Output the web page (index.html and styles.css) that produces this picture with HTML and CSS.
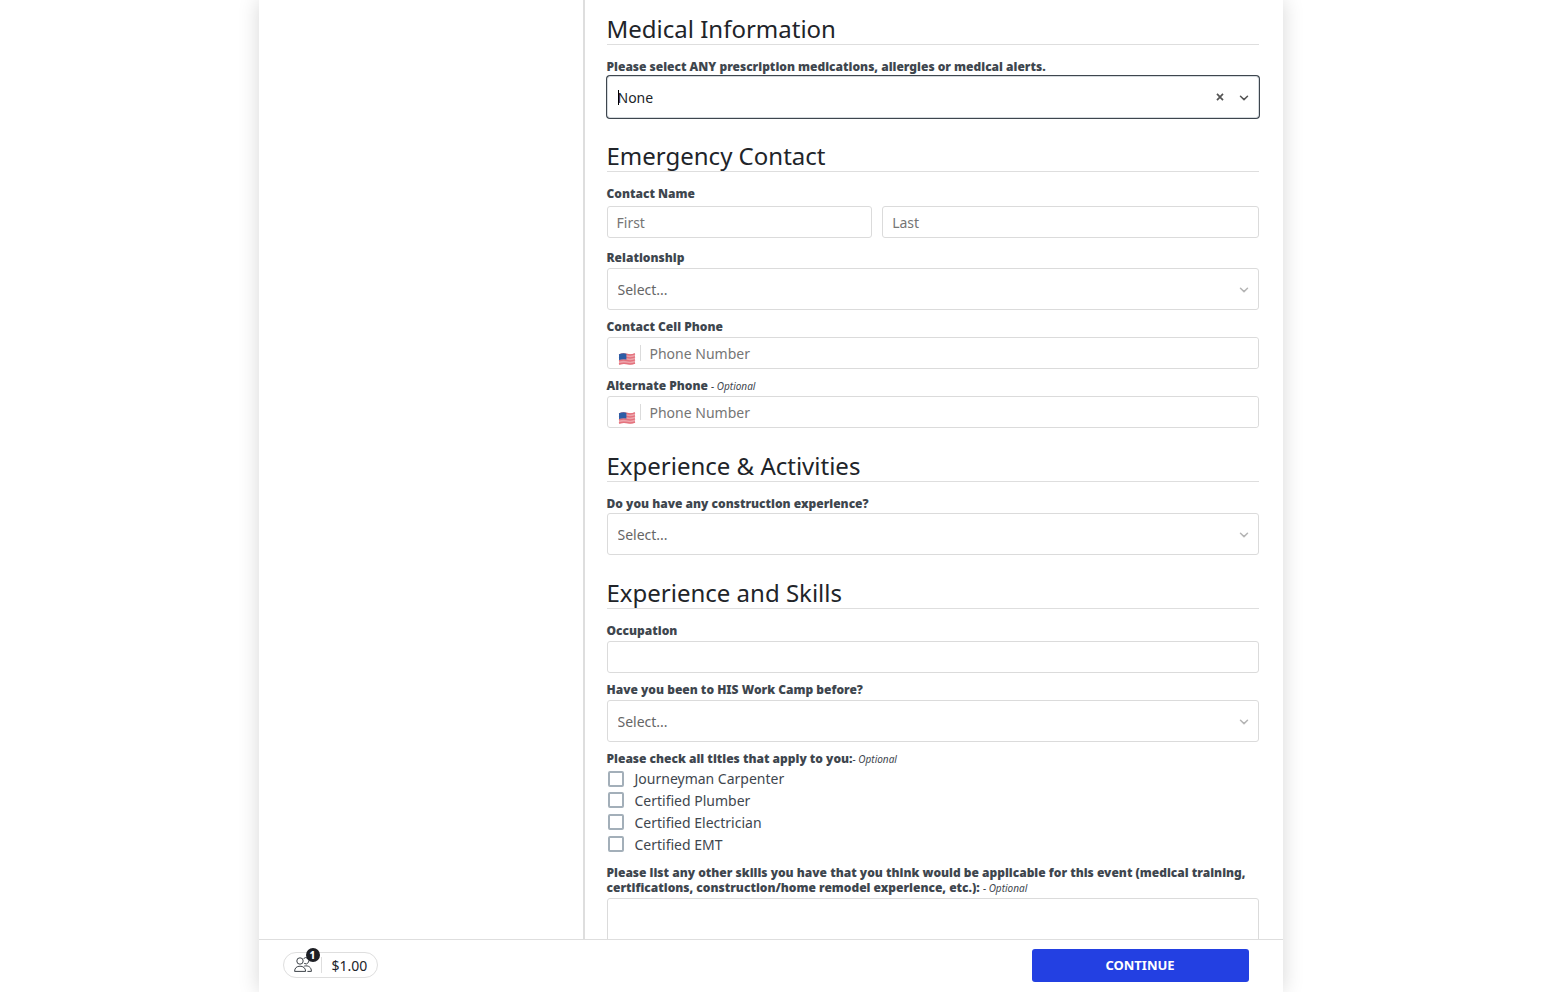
FILE: index.html
```
<!DOCTYPE html>
<html lang="en">
<head>
    <meta charset="UTF-8">
    <meta name="viewport" content="width=device-width, initial-scale=1.0">
    <title>Registration</title>
    <link rel="stylesheet" href="styles.css">
</head>
<body>

    <!-- Shared icons -->
    <svg class="icon-defs" width="0" height="0" aria-hidden="true">
        <symbol id="chevron" viewBox="0 0 10 10">
            <path d="M1.5 3.2 L5 6.6 L8.5 3.2" fill="none" stroke="currentColor" stroke-width="1.5" stroke-linecap="round" stroke-linejoin="round"/>
        </symbol>
        <symbol id="flag" viewBox="0 0 18 14">
            <path d="M1 2.2 Q5 0.8 9 1.8 T17 1.2 V11.8 Q13 13 9 12.2 T1 12.8 Z" fill="#eda4ab"/>
            <path d="M1 2.9 Q5 1.5 9 2.5 T17 1.9 M1 5.9 Q5 4.5 9 5.5 T17 4.9 M1 8.9 Q5 7.5 9 8.5 T17 7.9 M1 12 Q5 10.6 9 11.6 T17 11" fill="none" stroke="#e4727d" stroke-width="1.5"/>
            <path d="M1 2.2 Q5 0.8 8.4 1.7 V7.6 Q5 6.8 1 8 Z" fill="#2d5da6"/>
        </symbol>
    </svg>

    <div class="page">
        <main class="content">
            <aside class="sidebar"></aside>

            <form class="form" id="registration">
                <section>
                    <h2>Medical Information</h2>
                    <div class="field question">
                        <label for="medical">Please select ANY prescription medications, allergies or medical alerts.</label>
                        <div class="select-box active">
                            <select id="medical"><option>None</option></select>
                            <span class="text-cursor"></span>
                            <button class="clear" type="button" aria-label="Clear">
                                <svg width="8" height="8" viewBox="0 0 8 8"><path d="M1 0.8 L7 7.2 M7 0.8 L1 7.2" stroke="currentColor" stroke-width="1.7"/></svg>
                            </button>
                            <svg class="chevron"><use href="#chevron"/></svg>
                        </div>
                    </div>
                </section>

                <section>
                    <h2>Emergency Contact</h2>
                    <fieldset class="field name-field">
                        <legend>Contact Name</legend>
                        <div class="name-row">
                            <input type="text" placeholder="First" aria-label="First">
                            <input type="text" placeholder="Last" aria-label="Last">
                        </div>
                    </fieldset>
                    <div class="field">
                        <label for="relationship">Relationship</label>
                        <div class="select-box">
                            <select id="relationship"><option>Select...</option></select>
                            <svg class="chevron"><use href="#chevron"/></svg>
                        </div>
                    </div>
                    <div class="field">
                        <label for="cell">Contact Cell Phone</label>
                        <div class="phone">
                            <span class="country"><svg width="18" height="14"><use href="#flag"/></svg></span>
                            <input type="tel" id="cell" placeholder="Phone Number">
                        </div>
                    </div>
                    <div class="field">
                        <label for="alternate">Alternate Phone <em>- Optional</em></label>
                        <div class="phone">
                            <span class="country"><svg width="18" height="14"><use href="#flag"/></svg></span>
                            <input type="tel" id="alternate" placeholder="Phone Number">
                        </div>
                    </div>
                </section>

                <section>
                    <h2>Experience &amp; Activities</h2>
                    <div class="field question">
                        <label for="construction">Do you have any construction experience?</label>
                        <div class="select-box">
                            <select id="construction"><option>Select...</option></select>
                            <svg class="chevron"><use href="#chevron"/></svg>
                        </div>
                    </div>
                </section>

                <section>
                    <h2>Experience and Skills</h2>
                    <div class="field">
                        <label for="occupation">Occupation</label>
                        <input type="text" id="occupation">
                    </div>
                    <div class="field">
                        <label for="before">Have you been to HIS Work Camp before?</label>
                        <div class="select-box">
                            <select id="before"><option>Select...</option></select>
                            <svg class="chevron"><use href="#chevron"/></svg>
                        </div>
                    </div>
                    <fieldset class="field check-field">
                        <legend>Please check all titles that apply to you:<em>- Optional</em></legend>
                        <label class="check"><input type="checkbox"> Journeyman Carpenter</label>
                        <label class="check"><input type="checkbox"> Certified Plumber</label>
                        <label class="check"><input type="checkbox"> Certified Electrician</label>
                        <label class="check"><input type="checkbox"> Certified EMT</label>
                    </fieldset>
                    <div class="field">
                        <label for="skills">Please list any other skills you have that you think would be applicable for this event (medical training, certifications, construction/home remodel experience, etc.): <em>- Optional</em></label>
                        <textarea id="skills" rows="4"></textarea>
                    </div>
                </section>
            </form>
        </main>

        <footer class="footer">
            <button class="cart" type="button">
                <span class="people">
                    <svg width="18" height="16" viewBox="0 0 18 16" fill="none" stroke="#3c4248" stroke-width="1">
                        <circle cx="6" cy="4" r="3.2"/>
                        <path d="M9.6 1.6 A3.1 3.1 0 1 1 10.2 6.4"/>
                        <path d="M0.6 14.4 C0.6 10.9 2.8 9.2 6 9.2 S11.6 10.9 11.6 14.4 Z"/>
                        <path d="M10.2 9.1 C14.6 8.1 17.4 10.4 17.4 14.4 H13.4"/>
                    </svg>
                    <span class="badge">1</span>
                </span>
                <span class="total">$1.00</span>
            </button>
            <button class="continue" type="submit" form="registration">CONTINUE</button>
        </footer>
    </div>

</body>
</html>
```
FILE: styles.css
```
* {
    box-sizing: border-box;
}

body {
    margin: 0;
    background-color: #fff;
    color: #3e464e;
    font-family: "Noto Sans", sans-serif;
    font-size: 14px;
}

input,
select,
textarea,
button {
    font-family: inherit;
    font-size: 14px;
}

.icon-defs {
    position: absolute;
}

.page {
    display: flex;
    flex-direction: column;
    max-width: 1024px;
    height: 100vh;
    margin: 0 auto;
    background-color: #fff;
    box-shadow: 0 0 20px rgba(0, 0, 0, 0.16);
}

.content {
    display: flex;
    flex: 1;
    min-height: 0;
}

.sidebar {
    width: 326px;
    flex-shrink: 0;
    border-right: 2px solid #dedede;
}

.form {
    flex: 1;
    min-width: 0;
    padding: 0 24px 24px 22px;
    overflow-y: auto;
    scrollbar-width: none;
}

/* Sections */
section {
    display: flow-root;
}

h2 {
    margin: 14px 0;
    border-bottom: 1px solid #dedede;
    color: #212429;
    font-size: 24px;
    font-weight: 400;
    line-height: 30px;
}

.field {
    margin: 0 0 9px;
    padding: 0;
    border: none;
}

.field > label,
legend {
    display: block;
    margin-bottom: 3px;
    padding: 0;
    font-size: 12px;
    font-weight: 900;
    line-height: 15px;
}

.question > label {
    margin-bottom: 2px;
}

.name-field {
    margin-bottom: 12px;
}

.name-field legend {
    margin-bottom: 5px;
}

.check-field {
    margin-bottom: 10px;
}

.check-field legend {
    margin-bottom: 2px;
}

em {
    font-size: 10px;
    font-weight: 400;
    line-height: 10px;
}

/* Controls */
input[type="text"],
input[type="tel"],
select,
textarea {
    display: block;
    width: 100%;
    height: 32px;
    padding: 0 9px;
    border: 1px solid #dbdbdb;
    border-radius: 3px;
    outline: none;
    background-color: #fff;
    color: #212429;
}

input::placeholder {
    color: #757575;
    opacity: 1;
}

textarea {
    height: 96px;
    resize: none;
}

.name-row {
    display: grid;
    grid-template-columns: 12fr 17fr;
    gap: 10px;
}

.select-box {
    position: relative;
    color: #b5b5b5;
}

.select-box select {
    height: 42px;
    padding: 0 10px;
    appearance: none;
    color: #666;
}

.select-box.active {
    color: #555;
}

.select-box.active select {
    border-color: #d5dade;
    box-shadow: 0 0 0 1px #3e464e;
    color: #212429;
}

.chevron {
    position: absolute;
    top: 17px;
    right: 10px;
    width: 10px;
    height: 10px;
    pointer-events: none;
}

.text-cursor {
    position: absolute;
    top: 14px;
    left: 11px;
    width: 1px;
    height: 15px;
    background-color: #000;
}

.clear {
    position: absolute;
    top: 17px;
    right: 35px;
    display: flex;
    padding: 0;
    border: none;
    background: none;
    color: #555;
}

.phone {
    display: flex;
    align-items: center;
    height: 32px;
    border: 1px solid #dbdbdb;
    border-radius: 3px;
}

.phone input[type="tel"] {
    height: 30px;
    border: none;
}

.country {
    display: flex;
    align-items: flex-end;
    height: 16px;
    padding: 0 4px 0 10px;
    border-right: 1px solid #dbdbdb;
}

.country svg {
    margin-bottom: -5px;
}

.field > .check {
    display: flex;
    align-items: center;
    gap: 11px;
    height: 21px;
    margin: 0;
    font-size: 14px;
    font-weight: 400;
}

.field > .check + .check {
    height: 22px;
}

.check input {
    width: 16px;
    height: 16px;
    margin: 0 0 0 1px;
    border: 2px solid #a3afb9;
    border-radius: 2px;
    appearance: none;
}

.check input:checked {
    background-color: #2340e2;
}

/* Bottom bar */
.footer {
    display: flex;
    justify-content: space-between;
    align-items: center;
    height: 53px;
    padding: 0 34px 2px 24px;
    border-top: 1px solid #dedede;
}

.cart {
    display: flex;
    align-items: center;
    height: 26px;
    padding: 0 10px;
    border: 1px solid #dedede;
    border-radius: 13px;
    background-color: #fff;
    color: #212429;
}

.people {
    position: relative;
    display: flex;
    padding-right: 9px;
    border-right: 1px solid #dedede;
}

.badge {
    position: absolute;
    top: -9px;
    left: 12px;
    width: 14px;
    height: 14px;
    border-radius: 50%;
    background-color: #1d1f24;
    color: #fff;
    font-size: 10px;
    font-weight: 800;
    line-height: 14px;
}

.total {
    padding-left: 10px;
}

.continue {
    width: 217px;
    height: 33px;
    border: none;
    border-radius: 3px;
    background-color: #2340e2;
    color: #fff;
    font-size: 13px;
    font-weight: 700;
    cursor: pointer;
}
```
